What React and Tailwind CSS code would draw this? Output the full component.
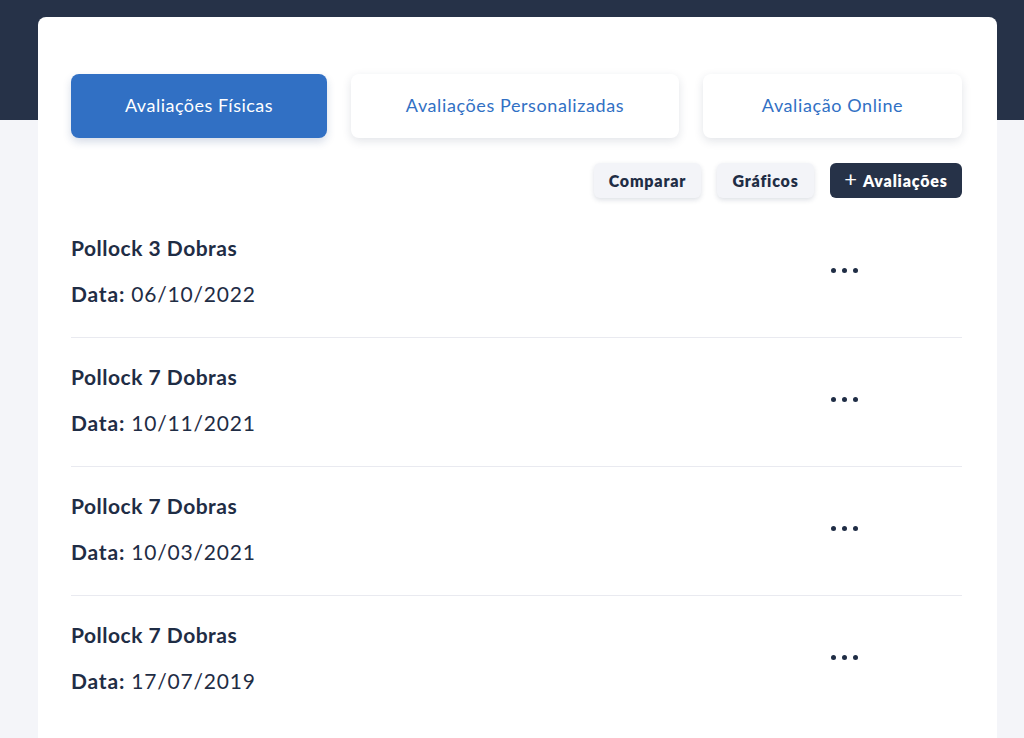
const items = [
  { title: 'Pollock 3 Dobras', date: '06/10/2022' },
  { title: 'Pollock 7 Dobras', date: '10/11/2021' },
  { title: 'Pollock 7 Dobras', date: '10/03/2021' },
  { title: 'Pollock 7 Dobras', date: '17/07/2019' },
];

const Dots = () => (
  <div className="flex items-center gap-[6px] mr-[104px] -mt-[2px]">
    <span className="w-[5px] h-[5px] rounded-full bg-[#1f2d45]" />
    <span className="w-[5px] h-[5px] rounded-full bg-[#1f2d45]" />
    <span className="w-[5px] h-[5px] rounded-full bg-[#1f2d45]" />
  </div>
);

export default function App() {
  return (
    <div
      className="h-[738px] overflow-hidden bg-[linear-gradient(to_bottom,#263248_120px,#f4f5f9_120px)] pt-[17px] text-[#1f2d45]"
      style={{ fontFamily: 'Lato, "Noto Sans", sans-serif' }}
    >
      <div className="mx-[38px] w-[959px] min-h-[721px] bg-white rounded-t-lg pl-[33px] pr-[35px] pt-[57px]">
        {/* Tabs */}
        <div className="flex gap-6">
          <button className="w-[256px] h-16 pb-[2px] rounded-lg bg-[#3170c4] text-white text-[18px] tracking-[0.5px] shadow-[0_4px_8px_rgba(30,60,120,0.18)]">
            Avaliações Físicas
          </button>
          <button className="w-[328px] h-16 pb-[2px] rounded-lg bg-white text-[#3170c4] text-[18px] tracking-[0.6px] shadow-[0_3px_10px_rgba(30,45,80,0.13)]">
            Avaliações Personalizadas
          </button>
          <button className="w-[259px] h-16 pb-[2px] rounded-lg bg-white text-[#3170c4] text-[18px] tracking-[0.6px] shadow-[0_3px_10px_rgba(30,45,80,0.13)]">
            Avaliação Online
          </button>
        </div>

        {/* Actions */}
        <div className="flex justify-end gap-4 mt-[25px]">
          <button className="w-[107px] h-[35px] rounded-md bg-[#f3f4f8] text-[16px] font-extrabold tracking-[0.8px] shadow-[0_2px_5px_rgba(30,45,80,0.15)]">
            Comparar
          </button>
          <button className="w-[97px] h-[35px] rounded-md bg-[#f3f4f8] text-[16px] font-extrabold tracking-[0.8px] shadow-[0_2px_5px_rgba(30,45,80,0.15)]">
            Gráficos
          </button>
          <button className="w-[132px] h-[35px] rounded-md bg-[#263248] text-white text-[16px] font-extrabold tracking-[0.8px] flex items-center justify-center gap-[5px]">
            <span className="text-[22px] font-normal leading-none -mt-[3px]">+</span>
            Avaliações
          </button>
        </div>

        {/* List */}
        <div className="mt-[11px]">
          {items.map((it, i) => (
            <div
              key={i}
              className="flex items-center justify-between border-b border-[#e9eaf0] last:border-b-0 pt-[27px] pb-[31px]"
            >
              <div>
                <p className="text-[21px] font-bold leading-6 tracking-[0.5px]">{it.title}</p>
                <p className="text-[21px] leading-6 mt-[22px] tracking-[0.8px]">
                  <span className="font-bold">Data:</span> {it.date}
                </p>
              </div>
              <Dots />
            </div>
          ))}
        </div>
      </div>
    </div>
  );
}
